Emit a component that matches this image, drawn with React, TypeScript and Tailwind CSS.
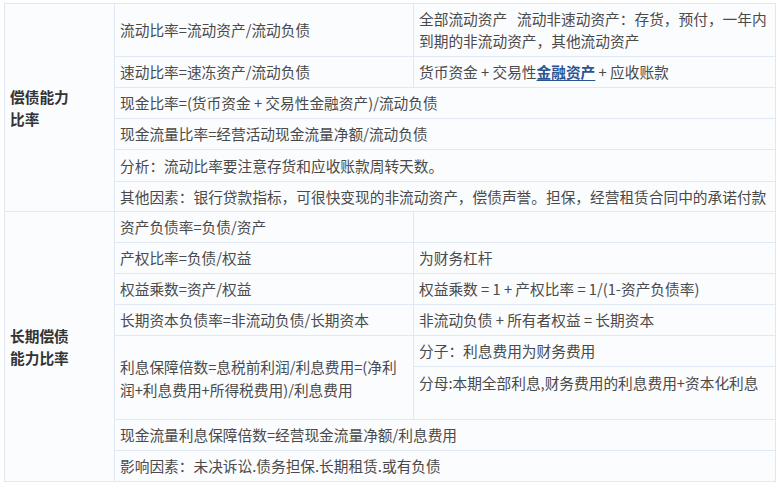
import React from "react";

const td = "border border-[#dfe8f3] px-[5px] py-0 align-middle text-[#4a4a4a]";
const lab = "border border-[#dfe8f3] px-[5px] py-0 align-middle font-bold text-[#333333]";

export default function App() {
  return (
    <div
      className="bg-white w-[778px] h-[482px] pl-[4px] pt-[3px] text-[14.7px] leading-[22px]"
      style={{ fontFamily: '"Noto Sans CJK SC", "Noto Sans", sans-serif' }}
    >
      <table className="border-collapse table-fixed w-[771px] bg-[#fbfcfe]">
        <colgroup>
          <col className="w-[110px]" />
          <col className="w-[299px]" />
          <col className="w-[362px]" />
        </colgroup>
        <tbody>
          <tr className="h-[53px]">
            <td className={lab} rowSpan={6}>
              偿债能力
              <br />
              比率
            </td>
            <td className={td}>流动比率=流动资产/流动负债</td>
            <td className={td}>
              全部流动资产&nbsp;&nbsp;&nbsp;流动非速动资产：存货，预付，一年内
              <br />
              到期的非流动资产，其他流动资产
            </td>
          </tr>
          <tr className="h-[31px]">
            <td className={td}>速动比率=速冻资产/流动负债</td>
            <td className={td}>
              货币资金 + 交易性
              <span className="font-bold text-[#2a5490] underline underline-offset-2">金融资产</span> + 应收账款
            </td>
          </tr>
          <tr className="h-[31px]">
            <td className={td} colSpan={2}>
              现金比率=(货币资金 + 交易性金融资产)/流动负债
            </td>
          </tr>
          <tr className="h-[31px]">
            <td className={td} colSpan={2}>
              现金流量比率=经营活动现金流量净额/流动负债
            </td>
          </tr>
          <tr className="h-[32px]">
            <td className={td} colSpan={2}>
              分析：流动比率要注意存货和应收账款周转天数。
            </td>
          </tr>
          <tr className="h-[30px]">
            <td className={td} colSpan={2}>
              其他因素：银行贷款指标，可很快变现的非流动资产，偿债声誉。担保，经营租赁合同中的承诺付款
            </td>
          </tr>

          <tr className="h-[31px]">
            <td className={lab} rowSpan={8}>
              长期偿债
              <br />
              能力比率
            </td>
            <td className={td}>资产负债率=负债/资产</td>
            <td className={td}></td>
          </tr>
          <tr className="h-[31px]">
            <td className={td}>产权比率=负债/权益</td>
            <td className={td}>为财务杠杆</td>
          </tr>
          <tr className="h-[31px]">
            <td className={td}>权益乘数=资产/权益</td>
            <td className={td}>权益乘数 = 1 + 产权比率 = 1/(1-资产负债率)</td>
          </tr>
          <tr className="h-[31px]">
            <td className={td}>长期资本负债率=非流动负债/长期资本</td>
            <td className={td}>非流动负债 + 所有者权益 = 长期资本</td>
          </tr>
          <tr className="h-[31px]">
            <td className={`${td} leading-[23px]`} rowSpan={2}>
              利息保障倍数=息税前利润/利息费用=(净利
              <br />
              润+利息费用+所得税费用)/利息费用
            </td>
            <td className={td}>分子：利息费用为财务费用</td>
          </tr>
          <tr className="h-[53px]">
            <td className={`${td} !align-top pt-[5px]`}>
              分母:本期全部利息,财务费用的利息费用+资本化利息
            </td>
          </tr>
          <tr className="h-[31px]">
            <td className={td} colSpan={2}>
              现金流量利息保障倍数=经营现金流量净额/利息费用
            </td>
          </tr>
          <tr className="h-[31px]">
            <td className={td} colSpan={2}>
              影响因素：未决诉讼.债务担保.长期租赁.或有负债
            </td>
          </tr>
        </tbody>
      </table>
    </div>
  );
}
